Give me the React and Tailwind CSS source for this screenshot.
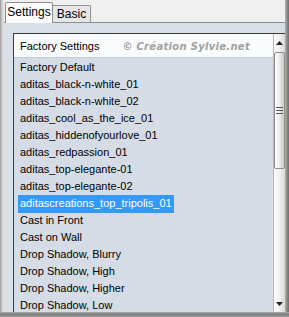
import React from "react";

const items = [
  "Factory Default",
  "aditas_black-n-white_01",
  "aditas_black-n-white_02",
  "aditas_cool_as_the_ice_01",
  "aditas_hiddenofyourlove_01",
  "aditas_redpassion_01",
  "aditas_top-elegante-01",
  "aditas_top-elegante-02",
  "aditascreations_top_tripolis_01",
  "Cast in Front",
  "Cast on Wall",
  "Drop Shadow, Blurry",
  "Drop Shadow, High",
  "Drop Shadow, Higher",
  "Drop Shadow, Low",
];

const SELECTED = 8;

export default function App() {
  return (
    <div
      className="w-[289px] h-[317px] overflow-hidden flex flex-col bg-[#d9dfe7] text-black"
      style={{ fontFamily: '"Liberation Sans", Arial, sans-serif' }}
    >
      <div className="flex h-[312px]">
        {/* left frame edge */}
        <div className="w-[4px] bg-gradient-to-r from-[#9a9a9a] via-[#cfcfcf] to-[#e6e6e6]" />
        {/* content */}
        <div className="flex-1 flex flex-col min-w-0">
          {/* tab strip */}
          <div className="h-[23px] flex items-end bg-[#efefef] border-b border-[#8d8d8d] pl-[1px]">
            <div className="relative z-10 -mb-px w-[48px] h-[21px] bg-[#fbfbfb] border border-b-0 border-[#8d8d8d] rounded-t-[2px] flex items-center justify-center text-[12px] leading-none pb-[2px]">
              Settings
            </div>
            <div className="w-[38px] h-[17px] bg-[#e6e6e6] border border-l-0 border-b-0 border-[#929292] rounded-tr-[2px] flex items-center justify-center text-[12px] leading-none">
              Basic
            </div>
          </div>
          {/* panel */}
          <div className="flex-1 pt-[10px] pl-[9px] min-h-0 flex flex-col">
            <div className="flex-1 min-h-0 flex border-l border-t border-[#3c3c3c]">
              {/* list */}
              <div className="flex-1 min-w-0 flex flex-col bg-[#d5dce5] overflow-hidden">
                <div className="h-[24px] shrink-0 flex items-center bg-[#f9fafb] border-b border-[#c3cad3] pl-[6px] text-[11px] pt-[1px]">
                  <span>Factory Settings</span>
                  <span
                    className="ml-auto mr-[23px] italic text-[10px] text-[#a0a0a0] tracking-[0.3px]"
                    style={{ fontFamily: '"DejaVu Sans", Verdana, sans-serif', fontWeight: 600 }}
                  >
                    © Création Sylvie.net
                  </span>
                </div>
                {items.map((t, i) => (
                  <div key={t} className="h-[17px] shrink-0 flex items-center pl-[4px] pt-[2px] text-[11px] leading-none">
                    <span
                      className={
                        i === SELECTED
                          ? "h-[18px] flex items-center px-[2px] bg-[#3399ff] text-white"
                          : "px-[2px]"
                      }
                    >
                      {t}
                    </span>
                  </div>
                ))}
              </div>
              {/* scrollbar */}
              <div className="w-[12px] shrink-0 flex flex-col bg-gradient-to-r from-[#fbfbfb] via-[#f0f0f0] to-[#d8d8d8] border-l border-[#b8b8b8]">
                <div className="h-[18px] shrink-0 flex items-center justify-center">
                  <svg width="7" height="4" viewBox="0 0 7 4">
                    <path d="M3.5 0 L7 4 L0 4 Z" fill="#222" />
                  </svg>
                </div>
                <div className="h-[117px] shrink-0 rounded-[2px] border border-[#8f8f8f] bg-gradient-to-r from-[#ffffff] via-[#ebebeb] to-[#c9c9c9] flex items-center justify-center">
                  <svg width="7" height="7" viewBox="0 0 7 7">
                    <rect x="0" y="0" width="7" height="1" fill="#555" />
                    <rect x="0" y="3" width="7" height="1" fill="#555" />
                    <rect x="0" y="6" width="7" height="1" fill="#555" />
                  </svg>
                </div>
                <div className="flex-1" />
                <div className="h-[14px] shrink-0 flex items-center justify-center pb-[2px]">
                  <svg width="7" height="4" viewBox="0 0 7 4">
                    <path d="M0 0 L7 0 L3.5 4 Z" fill="#222" />
                  </svg>
                </div>
              </div>
            </div>
          </div>
        </div>
        {/* right frame edge */}
        <div className="w-[4px] bg-gradient-to-r from-[#b4b4b4] via-[#8a8a8a] to-[#6e6e6e]" />
      </div>
      {/* bottom frame edge */}
      <div className="h-[5px] bg-gradient-to-b from-[#a9a9a9] via-[#7d7d7d] to-[#9a9a9a]" />
    </div>
  );
}
